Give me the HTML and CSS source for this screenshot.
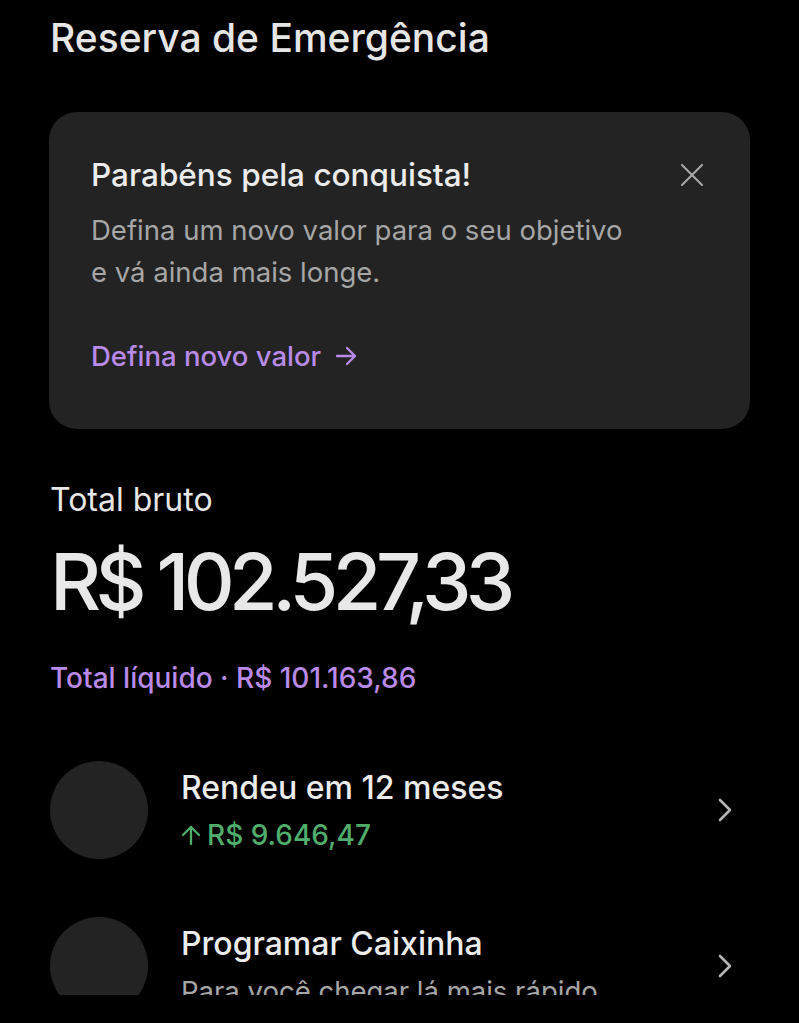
FILE: index.html
```html
<!DOCTYPE html>
<html lang="pt-BR">
<head>
    <meta charset="UTF-8">
    <meta name="viewport" content="width=device-width, initial-scale=1.0">
    <title>Reserva de Emergência</title>
    <link rel="stylesheet" href="styles.css">
</head>

<body>
    <div id="screen">
        <h1 class="pageTitle">Reserva de Emergência</h1>

        <!--card de objetivo atingido-->
        <div class="goalCard">
            <div class="goalHead">
                <p class="goalTitle">Parabéns pela conquista!</p>
                <button class="closeBtn" aria-label="Fechar">
                    <svg width="24" height="24" viewBox="0 0 24 24">
                        <path d="M2 2 L22 22 M22 2 L2 22" stroke="#a9a9a9" stroke-width="2" stroke-linecap="round" fill="none"/>
                    </svg>
                </button>
            </div>
            <p class="goalText">Defina um novo valor para o seu objetivo<br>e vá ainda mais longe.</p>
            <a class="goalLink" href="#">Defina novo valor
                <svg width="22" height="20" viewBox="0 0 22 20">
                    <path d="M2 10 H20 M12 2 L20 10 L12 18" stroke="#b98ae8" stroke-width="2.3" stroke-linecap="round" stroke-linejoin="round" fill="none"/>
                </svg>
            </a>
        </div>

        <div class="totals">
            <p class="grossLabel">Total bruto</p>
            <p class="grossValue">R$ 102.527,33</p>
            <p class="netValue">Total líquido · R$ 101.163,86</p>
        </div>

        <ul class="menuList">
            <li class="menuItem">
                <span class="itemIcon"></span>
                <div class="itemText">
                    <span class="itemTitle">Rendeu em 12 meses</span>
                    <span class="itemGain">
                        <svg width="20" height="22" viewBox="0 0 20 22">
                            <path d="M10 20 V3 M2 11 L10 3 L18 11" stroke="#4fae6c" stroke-width="2.3" stroke-linecap="round" stroke-linejoin="round" fill="none"/>
                        </svg>R$ 9.646,47</span>
                </div>
                <svg class="chevron" width="16" height="26" viewBox="0 0 16 26">
                    <path d="M3 3 L13 13 L3 23" stroke="#b5b5b5" stroke-width="2.6" stroke-linecap="round" stroke-linejoin="round" fill="none"/>
                </svg>
            </li>
            <li class="menuItem">
                <span class="itemIcon"></span>
                <div class="itemText">
                    <span class="itemTitle">Programar Caixinha</span>
                    <span class="itemSub">Para você chegar lá mais rápido</span>
                </div>
                <svg class="chevron" width="16" height="26" viewBox="0 0 16 26">
                    <path d="M3 3 L13 13 L3 23" stroke="#b5b5b5" stroke-width="2.6" stroke-linecap="round" stroke-linejoin="round" fill="none"/>
                </svg>
            </li>
        </ul>
    </div>
</body>

</html>
```

FILE: styles.css
```css
body {
    margin: 0;
    background-color: #000;
    font-family: Inter, "Noto Sans", sans-serif;
    color: #e8e8e8;
}
p {
    margin: 0;
}
#screen {
    height: 995px;
    overflow: hidden;
    padding: 0 49px 0 50px;
}
.pageTitle {
    margin: 0;
    padding-top: 15px;
    font-size: 39px;
    font-weight: 500;
    line-height: 46px;
    color: #e6e6e6;
}
.goalCard {
    margin-top: 51px;
    margin-left: -1px;
    background-color: #232323;
    border-radius: 28px;
    padding: 41px 36px 53px 42px;
}
.goalHead {
    display: flex;
    justify-content: space-between;
    align-items: center;
}
.goalTitle {
    font-size: 31.5px;
    font-weight: 500;
    color: #ececec;
    line-height: 40px;
}
.closeBtn {
    background: none;
    border: 0;
    padding: 0;
    width: 44px;
    height: 44px;
    display: flex;
    align-items: center;
    justify-content: center;
}
.goalText {
    margin-top: 12px;
    font-size: 27.5px;
    line-height: 42px;
    color: #a6a6a6;
}
.goalLink {
    display: flex;
    align-items: center;
    gap: 14px;
    margin-top: 43px;
    font-size: 27.5px;
    font-weight: 500;
    color: #b98ae8;
    text-decoration: none;
    line-height: 40px;
}
.totals {
    margin-top: 51px;
}
.grossLabel {
    font-size: 32px;
    line-height: 40px;
    color: #e6e6e6;
}
.grossValue {
    margin-top: 16px;
    font-size: 79px;
    font-weight: 500;
    letter-spacing: -5.6px;
    line-height: 90px;
    color: #e8e8e8;
}
.netValue {
    margin-top: 32px;
    font-size: 28px;
    font-weight: 500;
    line-height: 40px;
    color: #b98ae8;
}
.menuList {
    list-style: none;
    margin: 63px 0 0 0;
    padding: 0;
    display: flex;
    flex-direction: column;
    gap: 58px;
}
.menuItem {
    display: flex;
    align-items: center;
}
.itemIcon {
    flex: none;
    width: 98px;
    height: 98px;
    border-radius: 50%;
    background-color: #232323;
}
.itemText {
    flex: 1;
    display: flex;
    flex-direction: column;
    padding-left: 33px;
    gap: 8px;
}
.itemTitle {
    font-size: 32px;
    font-weight: 500;
    line-height: 42px;
    color: #ececec;
}
.itemGain {
    display: flex;
    align-items: center;
    gap: 6px;
    font-size: 28px;
    font-weight: 500;
    line-height: 36px;
    color: #4fae6c;
}
.itemSub {
    font-size: 27.5px;
    line-height: 36px;
    color: #a6a6a6;
}
.chevron {
    flex: none;
    margin-right: 17px;
}
```
